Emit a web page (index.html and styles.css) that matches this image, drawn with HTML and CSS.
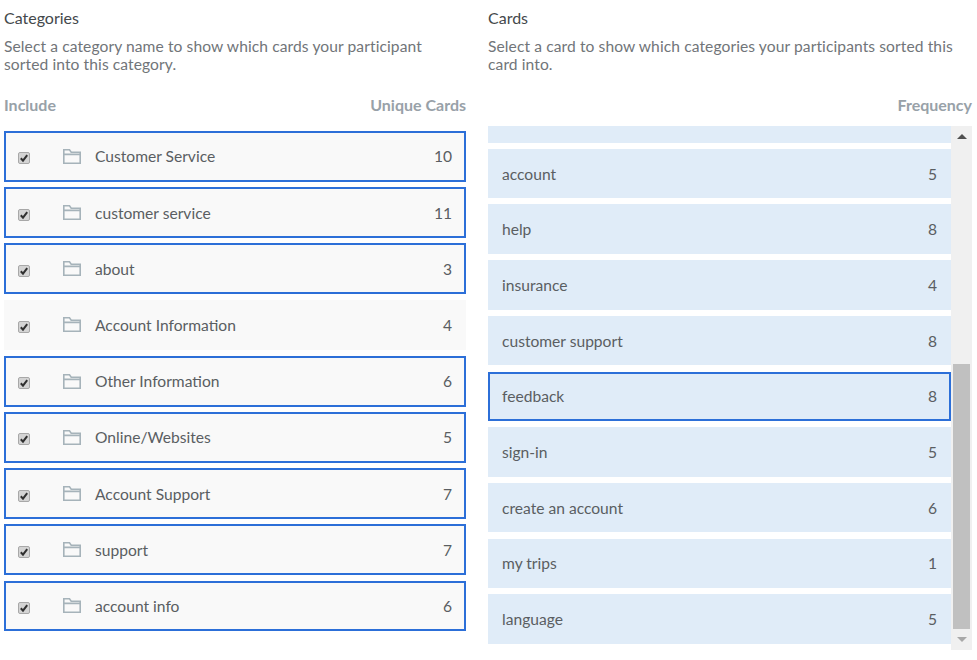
FILE: index.html
```html
<!DOCTYPE html>
<html lang="en">
<head>
    <meta charset="UTF-8">
    <title>Card sort results</title>
    <link rel="stylesheet" href="styles.css">
</head>
<body>
    <svg class="defs" width="0" height="0">
        <symbol id="folder" viewBox="0 0 18 15">
            <path d="M.8.8h5.7l1.7 2.4h9v11h-16.4zM.8 5.4h16.4" fill="none" stroke="currentColor" stroke-width="1.6"/>
        </symbol>
        <symbol id="tick" viewBox="0 0 12 12">
            <rect x=".5" y=".5" width="11" height="11" rx="1.5" fill="#d4d4d4" stroke="#a8a8a8"/>
            <path d="M2.8 6.2l2.2 2.4 4.2-5.4" fill="none" stroke="#303030" stroke-width="2"/>
        </symbol>
    </svg>
    <main class="page">
        <section class="panel">
            <h2>Categories</h2>
            <p class="hint">Select a category name to show which cards your participant sorted into this category.</p>
            <div class="heads"><span>Include</span><span>Unique Cards</span></div>
            <ul class="categories">
                <li class="row selected"><svg class="check"><use href="#tick"/></svg><svg class="folder"><use href="#folder"/></svg><span class="name">Customer Service</span><span>10</span></li>
                <li class="row selected"><svg class="check"><use href="#tick"/></svg><svg class="folder"><use href="#folder"/></svg><span class="name">customer service</span><span>11</span></li>
                <li class="row selected"><svg class="check"><use href="#tick"/></svg><svg class="folder"><use href="#folder"/></svg><span class="name">about</span><span>3</span></li>
                <li class="row"><svg class="check"><use href="#tick"/></svg><svg class="folder"><use href="#folder"/></svg><span class="name">Account Information</span><span>4</span></li>
                <li class="row selected"><svg class="check"><use href="#tick"/></svg><svg class="folder"><use href="#folder"/></svg><span class="name">Other Information</span><span>6</span></li>
                <li class="row selected"><svg class="check"><use href="#tick"/></svg><svg class="folder"><use href="#folder"/></svg><span class="name">Online/Websites</span><span>5</span></li>
                <li class="row selected"><svg class="check"><use href="#tick"/></svg><svg class="folder"><use href="#folder"/></svg><span class="name">Account Support</span><span>7</span></li>
                <li class="row selected"><svg class="check"><use href="#tick"/></svg><svg class="folder"><use href="#folder"/></svg><span class="name">support</span><span>7</span></li>
                <li class="row selected"><svg class="check"><use href="#tick"/></svg><svg class="folder"><use href="#folder"/></svg><span class="name">account info</span><span>6</span></li>
            </ul>
        </section>
        <section class="panel cards-panel">
            <h2>Cards</h2>
            <p class="hint">Select a card to show which categories your participants sorted this card into.</p>
            <div class="heads right"><span>Frequency</span></div>
            <div class="scroller">
                <ul class="cards">
                    <li class="card cut"></li>
                    <li class="card"><span>account</span><span>5</span></li>
                    <li class="card"><span>help</span><span>8</span></li>
                    <li class="card"><span>insurance</span><span>4</span></li>
                    <li class="card"><span>customer support</span><span>8</span></li>
                    <li class="card selected"><span>feedback</span><span>8</span></li>
                    <li class="card"><span>sign-in</span><span>5</span></li>
                    <li class="card"><span>create an account</span><span>6</span></li>
                    <li class="card"><span>my trips</span><span>1</span></li>
                    <li class="card"><span>language</span><span>5</span></li>
                </ul>
                <div class="scrollbar">
                    <span class="arrow up"></span>
                    <span class="thumb"></span>
                    <span class="arrow down"></span>
                </div>
            </div>
        </section>
    </main>
</body>
</html>
```

FILE: styles.css
```css
* {
    margin: 0;
    padding: 0;
    box-sizing: border-box;
}

body {
    background: #ffffff;
    color: #5a5e62;
    font-family: Lato, sans-serif;
    font-size: 15.6px;
}

.defs {
    display: block;
    height: 0;
}

.page {
    display: flex;
    gap: 22px;
    padding: 10px 5px 0 4px;
}

.panel {
    width: 462px;
}

.cards-panel {
    width: 484px;
}

h2 {
    color: #44484b;
    font-size: 16px;
    font-weight: 400;
    line-height: 15px;
}

.hint {
    margin-top: 12px;
    color: #717579;
    line-height: 18px;
    letter-spacing: 0.09px;
}

.heads {
    display: flex;
    justify-content: space-between;
    margin-top: 22px;
    color: #98a1a8;
    font-size: 16px;
    font-weight: 700;
    line-height: 20px;
}

.right {
    justify-content: flex-end;
}

ul {
    list-style: none;
}

.categories {
    display: flex;
    flex-direction: column;
    gap: 5.4px;
    margin-top: 16px;
}

.row {
    display: flex;
    align-items: center;
    height: 50.8px;
    padding: 0 14px;
    background: #f9f9f9;
}

.row.selected {
    border: 2px solid #2c6fd8;
    padding: 0 12px;
}

.check {
    width: 12px;
    height: 12px;
    margin-top: 4px;
}

.folder {
    width: 18px;
    height: 15px;
    margin: 0 14px 0 33px;
    color: #a6b3ba;
}

.name {
    flex: 1;
}

.scroller {
    display: flex;
    height: 524px;
    margin-top: 11px;
}

.cards {
    display: flex;
    flex-direction: column;
    gap: 6.2px;
    width: 463px;
}

.card {
    display: flex;
    align-items: center;
    justify-content: space-between;
    height: 49.5px;
    padding: 0 14px;
    background: #e0ecf8;
}

.card.cut {
    height: 16.6px;
}

.card.selected {
    border: 2px solid #2c6fd8;
    padding: 0 12px;
}

.scrollbar {
    display: flex;
    flex-direction: column;
    align-items: center;
    justify-content: space-between;
    width: 21px;
    background: #f0f0f0;
}

.thumb {
    width: 17px;
    height: 265px;
    margin-top: auto;
    background: #c0c0c0;
}

.arrow {
    width: 0;
    height: 0;
    border-left: 5px solid transparent;
    border-right: 5px solid transparent;
}

.up {
    margin-top: 8px;
    border-bottom: 5px solid #505050;
}

.down {
    margin: 8px 0;
    border-top: 5px solid #a8a8a8;
}
```
